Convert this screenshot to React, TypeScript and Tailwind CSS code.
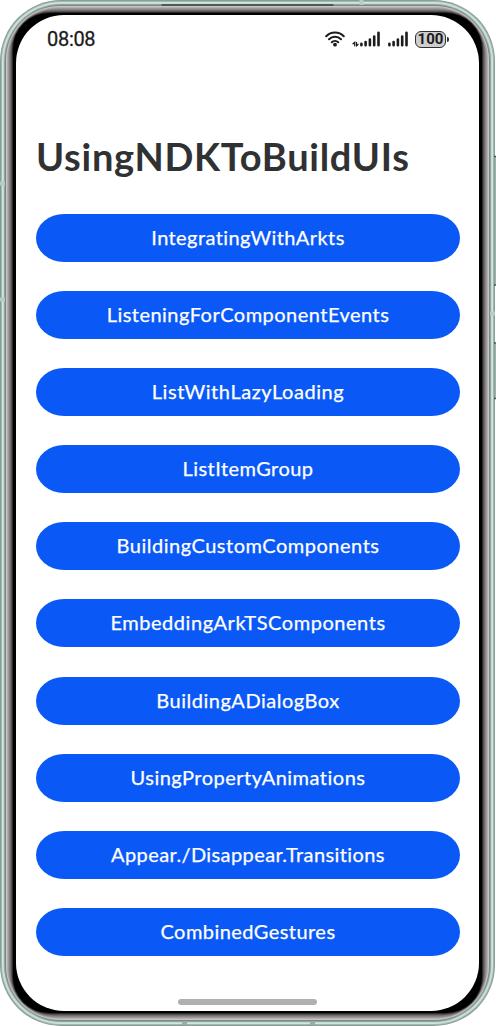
const items = [
  { label: 'IntegratingWithArkts', cls: 'tracking-[0.42px]' },
  { label: 'ListeningForComponentEvents', cls: 'tracking-[0.48px]' },
  { label: 'ListWithLazyLoading', cls: 'tracking-[0.56px]' },
  { label: 'ListItemGroup', cls: 'tracking-[0.45px]' },
  { label: 'BuildingCustomComponents', cls: 'tracking-[0.52px]' },
  { label: 'EmbeddingArkTSComponents', cls: 'tracking-[0.55px]' },
  { label: 'BuildingADialogBox', cls: 'tracking-[0.52px]' },
  { label: 'UsingPropertyAnimations', cls: 'tracking-[0.49px]' },
  { label: 'Appear./Disappear.Transitions', cls: 'tracking-[0.4px]' },
  { label: 'CombinedGestures', cls: 'tracking-[0.45px]' },
];

function Wifi() {
  return (
    <svg width="20" height="16" viewBox="0 0 20 16" fill="none" stroke="#1b1b1b" strokeWidth="2" strokeLinecap="round">
      <path d="M1.200 5.200C6 0.300 14 0.300 18.800 5.200" />
      <path d="M4 8.300C7.300 5 12.700 5 16 8.300" />
      <path d="M6.800 11.200C8.600 9.500 11.400 9.500 13.200 11.200" />
      <circle cx="10" cy="13.700" r="1.900" fill="#1b1b1b" stroke="none" />
    </svg>
  );
}

function Signal({ data }: { data?: boolean }) {
  return (
    <svg width={data ? 28 : 20} height="16" viewBox={data ? '-8 0 28 16' : '0 0 20 16'} fill="none" stroke="#1b1b1b" strokeWidth="2.600" strokeLinecap="round">
      <path d="M1.400 12.800V14.200M5.600 11V14.200M9.900 8.500V14.200M14.200 5.500V14.200M18.500 1.800V14.200" />
      {data && <path d="M-5.300 14.800V11.300L-7 12.800M-3.500 11.300V14.800L-1.800 13.300" strokeWidth="1.200" />}
    </svg>
  );
}

function StatusBar() {
  return (
    <div className="flex h-[48px] items-center pl-[31px] text-[#1b1b1b]">
      <span className="w-[278px] font-['Roboto',sans-serif] text-[20px] leading-6 tracking-[-0.3px] [-webkit-text-stroke:0.3px_#1b1b1b]">08:08</span>
      <Wifi />
      <span className="ml-[7px] flex"><Signal data /></span>
      <span className="ml-[8px] flex"><Signal /></span>
      <span className="ml-[7px] flex h-[17px] w-[31px] items-center justify-center rounded-[6px] border-[1.5px] border-[#303030] bg-[#cecece] font-['Roboto',sans-serif] text-[15px] leading-none font-bold">100</span>
      <span className="ml-px h-[5px] w-[2px] rounded-r bg-[#303030]" />
    </div>
  );
}

function FrameDetails() {
  return (
    <svg className="pointer-events-none absolute inset-0" width="496" height="1026" viewBox="0 0 496 1026" fill="none">
      <path d="M162 5H333" stroke="#3c4643" strokeWidth="1.400" strokeLinecap="round" />
      <path d="M0.500 184V299" stroke="#879993" />
      <path d="M495.500 156V285M495.500 343V398" stroke="#9fb2ac" />
      <path d="M494 156.500H496M494 285H496M494 343H496M494 398.500H496" stroke="#4a5552" strokeWidth="1.500" />
      <g stroke="#b9cbc5" strokeWidth="4">
        <path d="M361.500 0V5M0 183.500H5M0 299.500H5M490 313.500H495" />
      </g>
      <path d="M184.500 1021V1025M312.500 1021V1025" stroke="#9eaaa6" strokeWidth="5" />
    </svg>
  );
}

export default function App() {
  return (
    <div className="relative h-[1026px] w-[496px] overflow-hidden bg-white">
      <div className="h-full w-[495px] rounded-[61px] bg-[#899e97] p-px">
        <div className="h-full rounded-[60px] bg-[#a3b7b1] p-px">
          <div className="h-full rounded-[59px] bg-[#cfe5df] p-px">
            <div className="h-full rounded-[58px] bg-[#c4dad4] p-px">
              <div className="h-full rounded-[57px] bg-[#91a59f] p-px">
                <div className="h-full rounded-[56px] bg-[#7b8783] p-px">
                  <div className="h-full rounded-[54px] bg-[#c9c4c6] p-px">
                    <div className="h-full rounded-[52px] bg-[#b3aeb0] p-px">
                      <div className="h-full rounded-[50px] bg-[#9d999b] p-px">
                        <div className="h-full rounded-[47px] bg-[#878486] p-px">
                          <div className="h-full rounded-[44px] bg-[#706e70] p-px">
                            <div className="h-full rounded-[41px] bg-[#535153] p-px">
                              <div className="h-full rounded-[38px] bg-[#2c2b2c] p-px">
                                <div className="h-full rounded-[36px] bg-black px-[3px] py-[2px]">
                                  <div className="flex h-full flex-col rounded-[48px] bg-white">
                                    <StatusBar />
                                    <h1 className="mt-[69px] ml-[20px] h-[50px] whitespace-nowrap font-['Lato',sans-serif] text-[38px] leading-[49px] font-bold tracking-[0.72px] text-[#303133]">UsingNDKToBuildUIs</h1>
                                    <div className="mt-[32px] flex flex-col gap-[29.1px] pr-[19px] pl-[20px]">
                                      {items.map((item) => (
                                        <button key={item.label} type="button" className="flex h-[48px] w-full items-center justify-center rounded-[28px/24px] bg-[#0a59f7] pb-[2px] font-['Lato',sans-serif] text-[20px] leading-6 text-white [-webkit-text-stroke:0.25px_white]">
                                          <span className={item.cls}>{item.label}</span>
                                        </button>
                                      ))}
                                    </div>
                                    <div className="mt-auto mb-[6px] ml-[162px] h-[6px] w-[139px] rounded-full bg-[#b0b0b0]" />
                                  </div>
                                </div>
                              </div>
                            </div>
                          </div>
                        </div>
                      </div>
                    </div>
                  </div>
                </div>
              </div>
            </div>
          </div>
        </div>
      </div>
      <FrameDetails />
    </div>
  );
}
